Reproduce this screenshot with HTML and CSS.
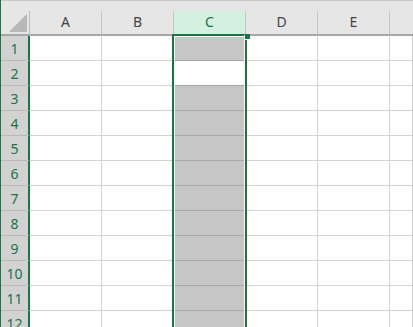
FILE: index.html
```html
<!DOCTYPE html>
<html lang="ja">
<head>
    <meta charset="UTF-8">
    <title>Sheet1</title>
    <link rel="stylesheet" href="styles.css">
</head>
<body>
    <div class="sheet">
        <div class="top-strip"></div>

        <div class="grid">
            <!-- column headers -->
            <div class="corner"><span class="corner-tri"></span></div>
            <div class="col-head">A</div>
            <div class="col-head">B</div>
            <div class="col-head is-selected">C</div>
            <div class="col-head">D</div>
            <div class="col-head">E</div>
            <div class="col-head col-rest"></div>

            <div class="row-head">1</div><div class="cell"></div><div class="cell"></div><div class="cell sel"></div><div class="cell"></div><div class="cell"></div><div class="cell"></div>
            <div class="row-head">2</div><div class="cell"></div><div class="cell"></div><div class="cell sel active"></div><div class="cell"></div><div class="cell"></div><div class="cell"></div>
            <div class="row-head">3</div><div class="cell"></div><div class="cell"></div><div class="cell sel"></div><div class="cell"></div><div class="cell"></div><div class="cell"></div>
            <div class="row-head">4</div><div class="cell"></div><div class="cell"></div><div class="cell sel"></div><div class="cell"></div><div class="cell"></div><div class="cell"></div>
            <div class="row-head">5</div><div class="cell"></div><div class="cell"></div><div class="cell sel"></div><div class="cell"></div><div class="cell"></div><div class="cell"></div>
            <div class="row-head">6</div><div class="cell"></div><div class="cell"></div><div class="cell sel"></div><div class="cell"></div><div class="cell"></div><div class="cell"></div>
            <div class="row-head">7</div><div class="cell"></div><div class="cell"></div><div class="cell sel"></div><div class="cell"></div><div class="cell"></div><div class="cell"></div>
            <div class="row-head">8</div><div class="cell"></div><div class="cell"></div><div class="cell sel"></div><div class="cell"></div><div class="cell"></div><div class="cell"></div>
            <div class="row-head">9</div><div class="cell"></div><div class="cell"></div><div class="cell sel"></div><div class="cell"></div><div class="cell"></div><div class="cell"></div>
            <div class="row-head">10</div><div class="cell"></div><div class="cell"></div><div class="cell sel"></div><div class="cell"></div><div class="cell"></div><div class="cell"></div>
            <div class="row-head">11</div><div class="cell"></div><div class="cell"></div><div class="cell sel"></div><div class="cell"></div><div class="cell"></div><div class="cell"></div>
            <div class="row-head">12</div><div class="cell"></div><div class="cell"></div><div class="cell sel"></div><div class="cell"></div><div class="cell"></div><div class="cell"></div>
        </div>

        <!-- selection outline over column C -->
        <div class="selection"><span class="fill-handle"></span></div>
    </div>
</body>
</html>
```

FILE: styles.css
```css
html, body {
    margin: 0;
    padding: 0;
    background: #ffffff;
}
.sheet {
    position: relative;
    width: 413px;
    height: 327px;
    overflow: hidden;
    border-left: 1px solid #217346;
    box-sizing: border-box;
    font-family: "Noto Sans", "Liberation Sans", sans-serif;
    font-size: 14px;
}
.top-strip {
    height: 11px;
    background: #e6e6e6;
    border-top: 1px solid #c8c8c8;
    box-sizing: border-box;
}
.grid {
    display: grid;
    grid-template-columns: 29px repeat(5, 72px) 1fr;
    grid-template-rows: 25px;
    grid-auto-rows: 25px;
}
.corner {
    position: relative;
    background: #e6e6e6;
    border-right: 1px solid #bcbcbc;
    border-bottom: 2px solid #a6a6a6;
}
.corner-tri {
    position: absolute;
    left: 8px;
    top: 3px;
    width: 18px;
    height: 18px;
    background: #b8b8b8;
    clip-path: polygon(100% 0, 100% 100%, 0 100%);
}
.col-head {
    display: flex;
    align-items: center;
    justify-content: center;
    background: #e6e6e6;
    color: #444444;
    border-right: 1px solid #c6c6c6;
    border-bottom: 2px solid #a6a6a6;
    padding-bottom: 2px;
}
.col-head.is-selected {
    background: #d3f0e0;
    color: #217346;
    border-bottom-color: #217346;
}
.col-rest {
    border-right: none;
}
.row-head {
    display: flex;
    align-items: center;
    justify-content: center;
    background: #d2d2d2;
    color: #217346;
    border-right: 2px solid #217346;
    border-bottom: 1px solid #bababa;
}
.cell {
    border-right: 1px solid #d4d4d4;
    border-bottom: 1px solid #d4d4d4;
}
.cell.sel {
    background: #c6c6c6;
    border-bottom-color: #a6a6a6;
}
.cell.sel.active {
    background: #ffffff;
}
.selection {
    position: absolute;
    left: 171px;
    top: 34px;
    width: 75px;
    height: 320px;
    border: 2px solid #217346;
    box-sizing: border-box;
    box-shadow: inset 0 0 0 1px #ffffff;
}
.fill-handle {
    position: absolute;
    right: -5px;
    top: -2px;
    width: 5px;
    height: 5px;
    background: #217346;
    box-shadow: -1px 1px 0 #ffffff;
}
```
